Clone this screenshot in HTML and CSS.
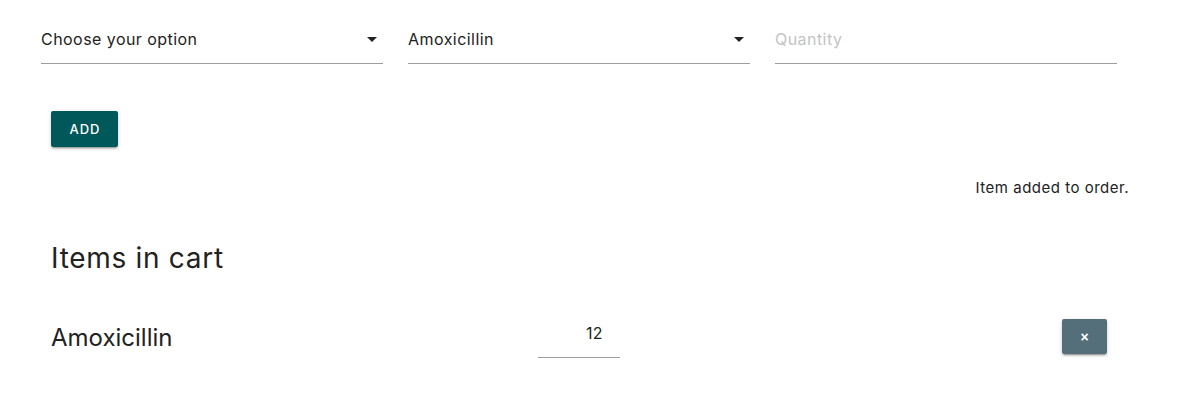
FILE: index.html
```html
<!DOCTYPE html>
<html>
<head>
<meta charset="utf-8">
<link rel="stylesheet" href="styles.css">
</head>
<body>
<div class="page">
  <div class="form-row">
    <div class="field select">
      <span class="value">Choose your option</span>
      <span class="caret"></span>
    </div>
    <div class="field select">
      <span class="value">Amoxicillin</span>
      <span class="caret"></span>
    </div>
    <div class="field">
      <span class="placeholder">Quantity</span>
    </div>
  </div>
  <div class="actions">
    <button class="btn-add">ADD</button>
  </div>
  <div class="status">Item added to order.</div>
  <h2 class="cart-title">Items in cart</h2>
  <div class="cart-row">
    <div class="item-name">Amoxicillin</div>
    <div class="qty"><span>12</span></div>
    <div class="spacer"></div>
    <button class="btn-remove">×</button>
  </div>
</div>
</body>
</html>
```

FILE: styles.css
```css
* { box-sizing: border-box; }
html, body { margin: 0; padding: 0; background: #fff; }
body {
  font-family: Inter, Roboto, "Liberation Sans", sans-serif;
  color: #222;
}
.page { padding: 0 0 0 41px; width: 1188px; }
.form-row {
  display: flex;
  gap: 25px;
  padding-top: 27px;
}
.field {
  width: 342px;
  height: 37px;
  border-bottom: 1px solid #9e9e9e;
  display: flex;
  align-items: flex-start;
  font-size: 16px;
  line-height: 24px;
  letter-spacing: 0.45px;
}
.field .value { flex: 1; color: #222; }
.field .placeholder { color: #c4c4c4; }
.caret {
  width: 0; height: 0;
  border-left: 5px solid transparent;
  border-right: 5px solid transparent;
  border-top: 5px solid #222;
  margin: 10px 6px 0 0;
}
.actions { padding: 47px 0 0 10px; }
.btn-add {
  width: 67px;
  height: 36px;
  border: 0;
  border-radius: 2px;
  background: #00585b;
  color: #fff;
  font-family: Inter, Roboto, "Liberation Sans", sans-serif;
  font-size: 13px;
  letter-spacing: 1px;
  font-weight: 500;
  box-shadow: 0 2px 2px rgba(0,0,0,0.14), 0 1px 5px rgba(0,0,0,0.12), 0 3px 1px -2px rgba(0,0,0,0.2);
  padding: 0 0 0 1px;
}
.status {
  text-align: right;
  padding-right: 59px;
  margin-top: 31px;
  font-size: 15px;
  line-height: 20px;
  letter-spacing: 0.5px;
  color: #222;
}
.cart-title {
  margin: 42px 0 0 10px;
  font-size: 28px;
  font-weight: 400;
  line-height: 36px;
  letter-spacing: 0.7px;
  color: #222;
}
.cart-row {
  display: flex;
  align-items: flex-start;
  margin-top: 37px;
  padding-left: 10px;
  width: 1066px;
}
.item-name { width: 487px; font-size: 24px; line-height: 32px; margin-top: 9px; }
.qty {
  width: 82px;
  height: 45px;
  border-bottom: 1px solid #9e9e9e;
  text-align: right;
  padding: 8px 17px 0 0;
  font-size: 16px;
  line-height: 24px;
  letter-spacing: 0.4px;
}
.spacer { flex: 1; }
.btn-remove {
  width: 45px;
  height: 35px;
  border: 0;
  border-radius: 2px;
  background: #546e7a;
  color: #fff;
  font-size: 14px;
  font-weight: 700;
  padding: 0;
  box-shadow: 0 2px 2px rgba(0,0,0,0.14), 0 1px 5px rgba(0,0,0,0.12), 0 3px 1px -2px rgba(0,0,0,0.2);
  margin-top: 6px;
}
```
